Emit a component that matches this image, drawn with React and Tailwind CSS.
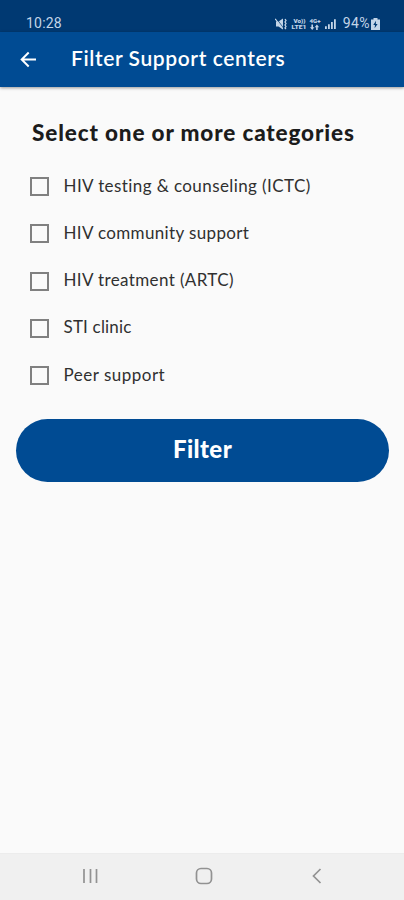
import React from 'react';

const categories = [
    { id: 'ictc', label: 'HIV testing & counseling (ICTC)', tracking: 'tracking-[0.41px]' },
    { id: 'community', label: 'HIV community support', tracking: 'tracking-[0.36px]' },
    { id: 'artc', label: 'HIV treatment (ARTC)', tracking: 'tracking-[0.38px]' },
    { id: 'sti', label: 'STI clinic', tracking: 'tracking-[0.18px]' },
    { id: 'peer', label: 'Peer support', tracking: 'tracking-[0.5px]' },
];

function StatusIcons() {
    return (
        <svg width="64" height="14" viewBox="0 0 64 14" fill="#c3d5e8" className="shrink-0">
            {/* Muted speaker with vibration marks */}
            <path d="M1 4.5h2.5L8 1.5v11L3.5 9.5H1z" />
            <path d="M0.3 1.8L7.5 11.5" stroke="#c3d5e8" strokeWidth="1.2" />
            <path d="M1.5 1.5L8.5 11" stroke="#003972" strokeWidth="0.7" />
            <path d="M10 2l1 1.5-1 1.5 1 1.5-1 1.5 1 1.5-1 1.5 1 1" fill="none" stroke="#c3d5e8" strokeWidth="1.3" />
            <text x="18.5" y="6" fontSize="5" fontWeight="900" textLength="12" lengthAdjust="spacingAndGlyphs">Vo))</text>
            <text x="16.5" y="12.3" fontSize="5" fontWeight="900" textLength="15" lengthAdjust="spacingAndGlyphs">LTE1</text>
            <text x="34.5" y="6" fontSize="5" fontWeight="900" textLength="11" lengthAdjust="spacingAndGlyphs">4G+</text>
            <path d="M38 7.5v2.7h1.4L37.2 13 35 10.2h1.4V7.5zM42.7 13v-2.7h1.4l-2.2-2.8-2.2 2.8h1.4V13z" />
            <path d="M50 9.3h1.8V12H50zM53 7.2h1.8V12H53zM56 5h1.8v7H56zM59 2.2h1.8V12H59z" />
        </svg>
    );
}

function StatusBar() {
    return (
        <div className="flex h-8 items-end justify-between bg-[#003972] pr-[24px] pl-[26px] font-[Roboto,sans-serif] text-[#c3d5e8]">
            <span className="text-[14px] leading-[17px] tracking-[0.2px]">10:28</span>
            <div className="flex items-center">
                <StatusIcons />
                <span className="ml-[4px] text-[14px] leading-[17px] tracking-[0.4px]">94%</span>
                <svg width="9" height="12" viewBox="0 0 9 12" className="ml-[1px] shrink-0">
                    <path d="M2.5 0h4v1.5H9V12H0V1.5h2.5z" fill="#c3d5e8" />
                    <path d="M5 2.8L2.3 7H4l-.4 3.2L6.6 6H4.8z" fill="#003972" />
                </svg>
            </div>
        </div>
    );
}

function Header() {
    return (
        <header className="flex h-[55px] items-center bg-[#004b93] pl-[20px] shadow-[0_1px_3px_rgba(0,0,0,0.4)]">
            <svg width="17" height="17" viewBox="0 0 17 17" fill="none" stroke="white" strokeWidth="2" className="shrink-0">
                <path d="M16 8.5H2M8.7 1.5L1.7 8.5l7 7" />
            </svg>
            <h1 className="ml-[34px] pb-[3px] text-[21px] leading-[26px] font-semibold tracking-[0.6px] whitespace-nowrap text-white">
                Filter Support centers
            </h1>
        </header>
    );
}

function NavigationBar() {
    return (
        <nav className="flex h-[47px] items-center border-t border-[#ececec] bg-[#f0f0f0] pb-[2px] pl-[82px]">
            <svg width="17" height="16" viewBox="0 0 17 16" fill="none" stroke="#929292" strokeWidth="1.7">
                <path d="M2 1v14M8.5 1v14M14.5 1v14" />
            </svg>
            <svg width="18" height="18" viewBox="0 0 18 18" fill="none" stroke="#929292" strokeWidth="1.7" className="ml-[96px]">
                <rect x="1.5" y="1.5" width="15" height="15" rx="4.5" />
            </svg>
            <svg width="10" height="16" viewBox="0 0 10 16" fill="none" stroke="#929292" strokeWidth="1.7" className="ml-[99px]">
                <path d="M8.5 1L1.5 8l7 7" />
            </svg>
        </nav>
    );
}

export default function App() {
    return (
        <div className="flex h-[900px] w-[404px] flex-col overflow-hidden bg-[#fafafa] font-[Lato,sans-serif]">
            <StatusBar />
            <Header />

            <main className="flex-1 px-4 pt-[32px]">
                <h2 className="ml-4 text-[22.5px] leading-[28px] font-black tracking-[0.86px] whitespace-nowrap text-[#1c1c1c]">
                    Select one or more categories
                </h2>

                <div className="mt-[16px] ml-[14px]">
                    {categories.map((category) => (
                        <label key={category.id} className="flex h-[47.25px] items-center">
                            <input
                                type="checkbox"
                                className="size-[19px] shrink-0 appearance-none border-2 border-[#808080] bg-transparent"
                            />
                            <span className={`ml-[14.5px] pb-[2px] text-[17px] leading-[22px] whitespace-nowrap text-[#303030] ${category.tracking}`}>
                                {category.label}
                            </span>
                        </label>
                    ))}
                </div>

                <button className="mt-[20px] h-[63px] w-[373px] rounded-full bg-[#004b93] pb-[4px] text-[24px] font-black tracking-[0.4px] text-white">
                    Filter
                </button>
            </main>

            <NavigationBar />
        </div>
    );
}
